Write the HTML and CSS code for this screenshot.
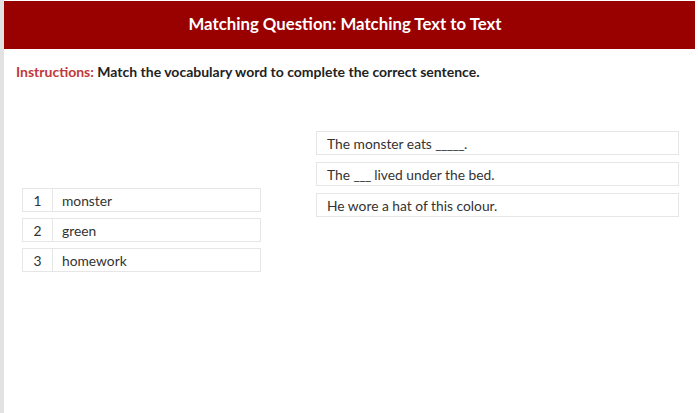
FILE: index.html
```html
<!DOCTYPE html>
<html>
  <head>
    <meta charset='utf-8'>
    <title>Matching Question: Matching Text to Text</title>
    <link rel="stylesheet" href="styles.css">
  </head>
  <body>
    <div class='page'>
      <h1>Matching Question: Matching Text to Text</h1>
      <p class='instructions'>
        <span class='label'>Instructions:</span> Match the vocabulary word to complete the correct sentence.
      </p>
      <div class='matching'>
        <ul class='words'>
          <li><span class='num'>1</span><span class='text'>monster</span></li>
          <li><span class='num'>2</span><span class='text'>green</span></li>
          <li><span class='num'>3</span><span class='text'>homework</span></li>
        </ul>
        <ul class='sentences'>
          <li>The monster eats <span class='blank'>_____</span>.</li>
          <li>The <span class='blank'>___</span> lived under the bed.</li>
          <li>He wore a hat of this colour.</li>
        </ul>
      </div>
    </div>
  </body>
</html>
```

FILE: styles.css
```css
html, body {
  margin: 0;
  padding: 0;
  background-color: #fff;
}
body {
  font-family: Lato, "Liberation Sans", sans-serif;
  font-size: 13.8px;
  color: #333;
}
.page {
  border-left: solid 4px #e2e2e2;
  height: 413px;
  box-sizing: border-box;
  padding-top: 1px;
  padding-right: 3px;
}
h1 {
  margin: 0;
  background-color: #990000;
  color: #fff;
  font-size: 16.8px;
  font-weight: bold;
  text-align: center;
  height: 48px;
  line-height: 46px;
  padding-right: 9px;
}
.instructions {
  margin: 14px 0 0 12px;
  font-weight: bold;
  font-size: 14px;
  color: #222;
}
.instructions .label {
  color: #c0393b;
}
.matching {
  display: flex;
  margin: 51px 0 0 18px;
}
ul {
  list-style: none;
  margin: 0;
  padding: 0;
}
li {
  border: solid 1px #e6e6e6;
  box-sizing: border-box;
  height: 24px;
  margin-bottom: 7px;
  display: flex;
  align-items: center;
  white-space: pre;
}
.words {
  width: 239px;
  margin-top: 57px;
}
.words li {
  margin-bottom: 6px;
}
.num {
  width: 29px;
  text-align: center;
  border-right: solid 1px #e6e6e6;
  align-self: stretch;
  display: flex;
  align-items: center;
  justify-content: center;
}
.text {
  padding-left: 9px;
}
.sentences {
  width: 363px;
  margin-left: 55px;
}
.sentences li {
  padding-left: 10px;
}
.blank {
  letter-spacing: -0.6px;
}
```
